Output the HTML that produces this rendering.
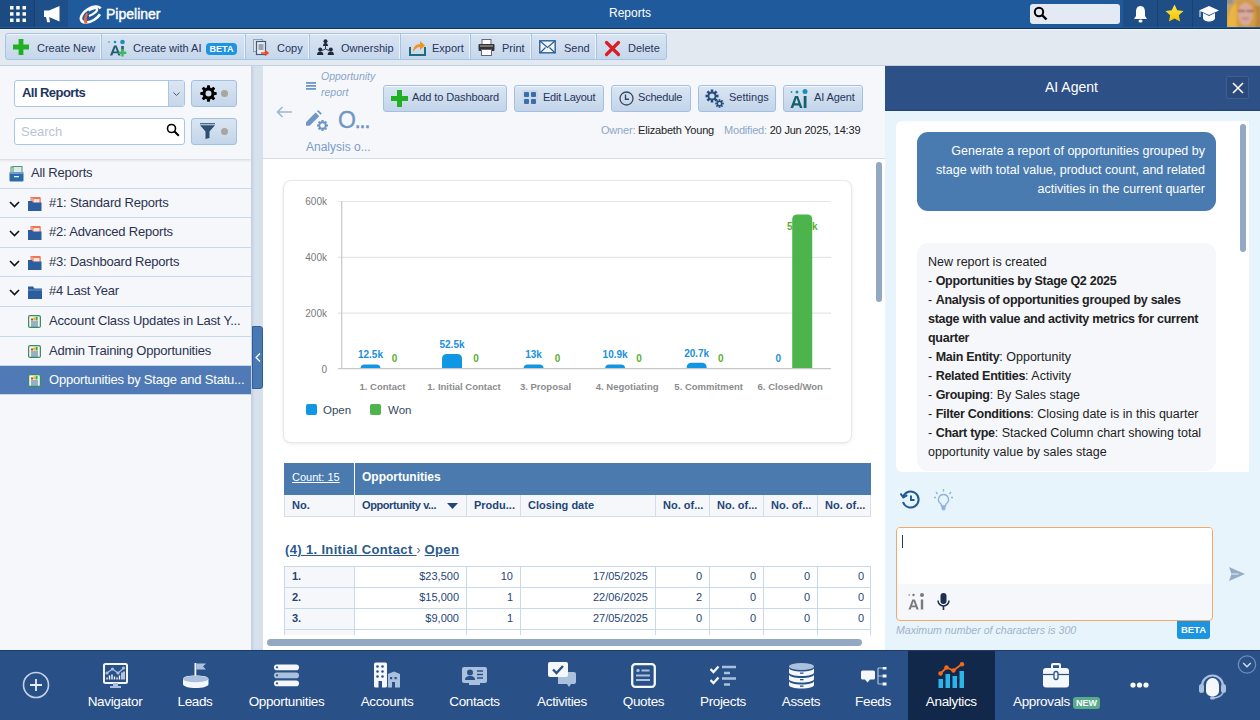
<!DOCTYPE html>
<html><head><meta charset="utf-8">
<style>
*{box-sizing:border-box;margin:0;padding:0}
html,body{width:1260px;height:720px;overflow:hidden;font-family:"Liberation Sans",sans-serif;background:#f5f7fb;color:#1d3b66}
.abs{position:absolute}
svg{display:block}
#top{left:0;top:0;width:1260px;height:29px;background:#1f5b9c;border-bottom:1px solid #0e3262}
#tb{z-index:5;left:0;top:29px;width:1260px;height:37px;background:#e2e9f1;border-bottom:1px solid #c3d0de;box-shadow:inset 0 1px 0 #f3f6fa}
.grp{position:absolute;top:4px;height:27px;border:1px solid #a7c3e2;border-radius:3px;background:linear-gradient(#d8e4f2,#c6d7ec);box-shadow:inset 0 1px 0 #f2f6fb;display:flex}
.btn{position:relative;height:25px;display:flex;align-items:center;font-size:11px;color:#27355a;border-right:1px solid #a7c3e2;box-shadow:inset -1px 0 0 #eaf1fa}
.btn:last-child{border-right:none;box-shadow:none}
.btn svg{position:absolute;top:3px}
.btn span{position:absolute;top:8px;white-space:nowrap}
#left{left:0;top:65px;width:251px;height:585px;background:#f5f7fb}
#sep{left:251px;top:65px;width:12px;height:585px;background:#d7e1ec;box-shadow:inset 2px 0 2px rgba(60,80,110,0.12)}
#center{left:263px;top:65px;width:622px;height:585px;background:#fff}
#ai{left:885px;top:65px;width:375px;height:585px;background:#e8f4fc}
#nav{left:0;top:650px;width:1260px;height:70px;background:#2a5088}
</style></head><body>
<!-- TOP BAR -->
<div id="top" class="abs">
  <div class="abs" style="left:0;top:0;width:34px;height:27px;background:#1c4b82"></div>
  <div class="abs" style="left:34px;top:0;width:1px;height:27px;background:#173f6e"></div>
  <div class="abs" style="left:35px;top:0;width:33px;height:27px;background:#1f4f88"></div>
  <svg class="abs" style="left:10px;top:6px" width="16" height="16" viewBox="0 0 16 16" fill="#fff">
    <rect x="0" y="0" width="3.5" height="3.5"/><rect x="6.2" y="0" width="3.5" height="3.5"/><rect x="12.5" y="0" width="3.5" height="3.5"/>
    <rect x="0" y="6.2" width="3.5" height="3.5"/><rect x="6.2" y="6.2" width="3.5" height="3.5"/><rect x="12.5" y="6.2" width="3.5" height="3.5"/>
    <rect x="0" y="12.5" width="3.5" height="3.5"/><rect x="6.2" y="12.5" width="3.5" height="3.5"/><rect x="12.5" y="12.5" width="3.5" height="3.5"/>
  </svg>
  <svg class="abs" style="left:43px;top:5px" width="18" height="18" viewBox="0 0 18 18" fill="#fff"><path d="M1 5.5h5L16.5 1v15.5L6 12H1z"/><path d="M3 12h3.2l.8 5.3H4.2z"/></svg>
  <svg class="abs" style="left:78px;top:4px" width="26" height="21" viewBox="0 0 26 21"><g transform="rotate(-32 13 10.5)"><ellipse cx="13" cy="10.5" rx="11.3" ry="6.2" fill="none" stroke="#fff" stroke-width="2.6" stroke-dasharray="52 8" stroke-dashoffset="-6"/></g><path d="M10.5 6.5 C14 4.5 18 3.5 19 5 C20 6.5 16 10 11 12" fill="none" stroke="#fff" stroke-width="2.2"/><path d="M6.5 19.5 C5 16 6 12 8.5 8.5 L10 10 C8.5 13 8.5 16 9.5 19.5z" fill="#f0623a"/></svg>
  <div class="abs" style="left:106px;top:6px;font-size:14px;color:#fff;-webkit-text-stroke:0.4px #fff">Pipeliner</div>
  <div class="abs" style="left:609px;top:6px;font-size:12px;color:#fff">Reports</div>
  <div class="abs" style="left:1030px;top:4px;width:90px;height:20px;background:#e3eaf3;border-radius:3px"></div>
  <svg class="abs" style="left:1033px;top:6px" width="15" height="15" viewBox="0 0 15 15"><circle cx="6" cy="6" r="4.2" fill="none" stroke="#000" stroke-width="2"/><path d="M9 9l4.5 4.5" stroke="#000" stroke-width="2.4"/></svg>
  <div class="abs" style="left:1123px;top:0;width:104px;height:27px;background:#1f4d86"></div>
  <div class="abs" style="left:1157px;top:0;width:1px;height:27px;background:#1a4170"></div>
  <div class="abs" style="left:1192px;top:0;width:1px;height:27px;background:#1a4170"></div>
  <svg class="abs" style="left:1133px;top:5px" width="15" height="18" viewBox="0 0 15 18" fill="#fff"><path d="M7.5 1C4 1 3 4 3 7v4L1 14h13l-2-3V7c0-3-1-6-4.5-6z"/><ellipse cx="7.5" cy="16" rx="2" ry="1.5"/></svg>
  <svg class="abs" style="left:1165px;top:4px" width="19" height="18" viewBox="0 0 20 19"><defs><linearGradient id="sg" x1="0" y1="0" x2="0" y2="1"><stop offset="0" stop-color="#ffe84a"/><stop offset="1" stop-color="#f2c200"/></linearGradient></defs><path d="M10 0.5l2.9 6.1 6.6.8-4.9 4.5 1.3 6.6L10 15.2l-5.9 3.3 1.3-6.6L.5 7.4l6.6-.8z" fill="url(#sg)"/></svg>
  <svg class="abs" style="left:1199px;top:6px" width="20" height="16" viewBox="0 0 20 16" fill="#fff"><path d="M10 0L0 4.5 10 9l10-4.5z"/><path d="M4 7v5c0 2 3 3.5 6 3.5s6-1.5 6-3.5V7l-6 3z"/><path d="M1 5v6" stroke="#fff" stroke-width="1"/></svg>
  <svg class="abs" style="left:1227px;top:0" width="33" height="27" viewBox="0 0 33 27"><defs><filter id="bl" x="-20%" y="-20%" width="140%" height="140%"><feGaussianBlur stdDeviation="1.1"/></filter><clipPath id="avc"><rect width="33" height="27"/></clipPath></defs><g clip-path="url(#avc)"><rect width="33" height="27" fill="#b8a48a"/><g filter="url(#bl)"><rect x="-2" y="-2" width="8" height="6" fill="#9a9088"/><path d="M-2 30C-3 14 2 1 17 -1c14 0 19 12 18 31z" fill="#d49a3c"/><path d="M0 28C0 16 3 6 9 3c2 6 0 16 1 25z" fill="#eab545"/><ellipse cx="18.5" cy="14" rx="7.5" ry="11.5" fill="#d9aa9c"/><path d="M11 11h7M19.5 11h7" stroke="#6a4a44" stroke-width="1.6"/><path d="M15 18q4 1.5 7 0" stroke="#a66a5e" stroke-width="1.3" fill="none"/><path d="M27 6c3 6 3 14 1 22h6V6z" fill="#b8863c"/></g></g></svg>
</div>
<!-- TOOLBAR -->
<div id="tb" class="abs">
 <div class="grp" style="left:5px;width:662px">
  <div class="btn" style="width:96px">
   <svg style="left:7px;top:5px" width="16" height="16" viewBox="0 0 16 16"><path d="M5.6 0h4.8v5.6H16v4.8h-5.6V16H5.6v-5.6H0V5.6h5.6z" fill="#21b021"/></svg>
   <span style="left:31px">Create New</span></div>
  <div class="btn" style="width:144px">
   <svg style="left:6px;top:4.5px" width="20" height="20" viewBox="0 0 20 20"><circle cx="1" cy="3" r="0.8" fill="#1a8fb8"/><circle cx="7" cy="3" r="1.3" fill="#1a8fb8"/><circle cx="14.5" cy="3" r="2.3" fill="#1a8fb8"/><path d="M2 16.5L6 6.5h2.6l4 10h-2.3l-.8-2.2H5.2l-.8 2.2zM5.9 12.5h3L7.3 8.3z" fill="#235e70"/><rect x="13.2" y="7" width="2.6" height="5" fill="#235e70"/><path d="M13.3 10h2.4v2.6h2.6V15h-2.6v2.6h-2.4V15h-2.6v-2.4h2.6z" fill="#3db85a"/></svg>
   <span style="left:31px">Create with AI</span>
   <div class="abs" style="left:104px;top:9px;width:31px;height:12px;border-radius:4px;background:#1b95e0;color:#fff;font-size:9px;font-weight:bold;line-height:12px;text-align:center">BETA</div></div>
  <div class="btn" style="width:64px">
   <svg style="left:7px;top:4.5px" width="17" height="18" viewBox="0 0 17 18"><rect x="0.5" y="0.5" width="9" height="12" fill="#dfe6ee" stroke="#8fa2b8"/><rect x="3.5" y="2.5" width="9" height="13" fill="#e9eef4" stroke="#3f5d7a" stroke-width="1.2"/><path d="M5.5 6h5M5.5 8h5M5.5 10h5" stroke="#556" stroke-width="1"/><path d="M8 14h6M12 11.5l3 2.5-3 2.5" stroke="#f04b1e" stroke-width="1.6" fill="none"/></svg>
   <span style="left:31px">Copy</span></div>
  <div class="btn" style="width:91px">
   <svg style="left:7px;top:4.5px" width="17" height="17" viewBox="0 0 17 17" fill="#1e2a3a"><circle cx="8.5" cy="2.2" r="2"/><path d="M6 7c0-2 1-3 2.5-3S11 5 11 7z"/><circle cx="3.2" cy="10.5" r="2"/><path d="M0 16c0-2.5 1.3-3.5 3.2-3.5S6.4 13.5 6.4 16z"/><circle cx="13.8" cy="10.5" r="2"/><path d="M10.6 16c0-2.5 1.3-3.5 3.2-3.5s3.2 1 3.2 3.5z"/><path d="M8.5 7v3M8.5 10L5 11.5M8.5 10l3.5 1.5" stroke="#1e2a3a" stroke-width="0.9" fill="none"/></svg>
   <span style="left:31px">Ownership</span></div>
  <div class="btn" style="width:70px">
   <svg style="left:8px;top:4.5px" width="17" height="17" viewBox="0 0 17 17"><path d="M1 8v8h15V8" fill="none" stroke="#1f6b80" stroke-width="2"/><path d="M4 13c0-5 3-8 7-8V2l5 4.5-5 4.5V8c-3 0-5 2-7 5z" fill="#f39421"/></svg>
   <span style="left:31px">Export</span></div>
  <div class="btn" style="width:61px">
   <svg style="left:7px;top:4.5px" width="17" height="17" viewBox="0 0 17 17"><rect x="4" y="0.5" width="9" height="5" fill="#fff" stroke="#667" stroke-width="1"/><rect x="0.5" y="5" width="16" height="7" rx="1" fill="#333"/><rect x="2" y="6" width="13" height="2" fill="#777"/><rect x="3.5" y="10.5" width="10" height="6" fill="#fff" stroke="#667"/></svg>
   <span style="left:31px">Print</span></div>
  <div class="btn" style="width:65px">
   <svg style="left:7px;top:5.5px" width="17" height="14" viewBox="0 0 17 14"><rect x="0.8" y="0.8" width="15.4" height="12" fill="#f2f6fa" stroke="#2a5f96" stroke-width="1.4"/><path d="M1 1l7.5 6.5L16 1M1 13l5.5-5.5M16 13l-5.5-5.5" stroke="#2a5f96" stroke-width="1.2" fill="none"/></svg>
   <span style="left:32px">Send</span></div>
  <div class="btn" style="width:69px">
   <svg style="left:7px;top:5.5px" width="17" height="17" viewBox="0 0 17 17"><path d="M2.5 2.5l12 12M14.5 2.5l-12 12" stroke="#d81f26" stroke-width="3.2" stroke-linecap="round"/></svg>
   <span style="left:31px">Delete</span></div>
 </div>
</div>
<div id="left" class="abs">
 <div class="abs" style="left:14px;top:15px;width:171px;height:27px;background:#fff;border:1px solid #a9c6e8;border-radius:3px"></div>
 <div class="abs" style="left:22px;top:20px;font-size:13px;font-weight:bold;color:#1d3560;letter-spacing:-0.55px">All Reports</div>
 <div class="abs" style="left:168px;top:16px;width:16px;height:25px;background:linear-gradient(#dbe6f2,#c7d7ea);border-left:1px solid #a9c6e8;border-radius:0 2px 2px 0"></div>
 <svg class="abs" style="left:173px;top:27px" width="7" height="4" viewBox="0 0 7 4"><path d="M0.5 0.5l3 3 3-3" stroke="#4a5a70" stroke-width="1" fill="none"/></svg>
 <div class="abs" style="left:191px;top:15px;width:46px;height:27px;background:linear-gradient(#d9e5f2,#c4d5ea);border:1px solid #a2c0e2;border-radius:3px"></div>
 <svg class="abs" style="left:199.5px;top:19.5px" width="17" height="17" viewBox="0 0 17 17"><path fill="#000" fill-rule="evenodd" d="M13.95 6.24 L14.13 6.73 L16.70 7.21 L16.70 9.79 L14.13 10.27 L13.95 10.76 L13.73 11.23 L15.21 13.38 L13.38 15.21 L11.23 13.73 L10.76 13.95 L10.27 14.13 L9.79 16.70 L7.21 16.70 L6.73 14.13 L6.24 13.95 L5.77 13.73 L3.62 15.21 L1.79 13.38 L3.27 11.23 L3.05 10.76 L2.87 10.27 L0.30 9.79 L0.30 7.21 L2.87 6.73 L3.05 6.24 L3.27 5.77 L1.79 3.62 L3.62 1.79 L5.77 3.27 L6.24 3.05 L6.73 2.87 L7.21 0.30 L9.79 0.30 L10.27 2.87 L10.76 3.05 L11.23 3.27 L13.38 1.79 L15.21 3.62 L13.73 5.77Z M11.5 8.5 A3.0 3.0 0 1 0 5.5 8.5 A3.0 3.0 0 1 0 11.5 8.5Z"/></svg>
 <div class="abs" style="left:221px;top:24.5px;width:7px;height:7px;border-radius:50%;background:#a8a6a0"></div>
 <div class="abs" style="left:14px;top:53px;width:171px;height:27px;background:#fff;border:1px solid #a9c6e8;border-radius:3px"></div>
 <div class="abs" style="left:21px;top:59px;font-size:13px;color:#b9c4d2">Search</div>
 <svg class="abs" style="left:166px;top:58px" width="14" height="14" viewBox="0 0 14 14"><circle cx="5.5" cy="5.5" r="4" fill="none" stroke="#000" stroke-width="1.6"/><path d="M8.3 8.3l4.5 4.5" stroke="#000" stroke-width="2"/></svg>
 <div class="abs" style="left:191px;top:53px;width:46px;height:27px;background:linear-gradient(#d9e5f2,#c4d5ea);border:1px solid #a2c0e2;border-radius:3px"></div>
 <svg class="abs" style="left:200px;top:58px" width="15" height="16" viewBox="0 0 15 16"><rect x="0" y="0" width="15" height="1.3" fill="#4d6a86"/><path d="M0 2.2h15L9.5 8.5V15L5.5 16V8.5z" fill="#2d5070"/></svg>
 <div class="abs" style="left:221px;top:63px;width:7px;height:7px;border-radius:50%;background:#a8a6a0"></div>
 <div class="abs" style="left:0;top:94px;width:251px;height:1px;background:#dde2e8;box-shadow:0 1px 2px rgba(0,0,0,0.10)"></div>
 <div class="abs" style="left:0;top:94px;width:251px;height:30px;background:transparent;border-bottom:1px solid #c6d9ee"><svg class="abs" style="left:9px;top:7px" width="15" height="16" viewBox="0 0 15 16"><rect x="2" y="1" width="9" height="7" fill="#e8f0e8" stroke="#4b9a6a"/><rect x="4" y="0.5" width="9" height="6" fill="#dfe8ef" stroke="#4b9a6a"/><rect x="0.5" y="7" width="14" height="8.5" rx="1" fill="#2f6aa8"/><rect x="0.5" y="6" width="14" height="2" fill="#6f9cc8"/><rect x="5" y="10" width="5" height="1.3" fill="#cfe"/></svg><div class="abs" style="left:31px;top:6px;font-size:13px;color:#2c3350;white-space:nowrap;letter-spacing:-0.2px">All Reports</div></div>
 <div class="abs" style="left:0;top:124px;width:251px;height:29px;background:transparent;border-bottom:1px solid #c6d9ee"><svg class="abs" style="left:9px;top:12px" width="11" height="7" viewBox="0 0 11 7"><path d="M1 1l4.5 4.5L10 1" stroke="#111" stroke-width="1.6" fill="none"/></svg><svg class="abs" style="left:28px;top:8px" width="14" height="14" viewBox="0 0 14 14"><rect x="3" y="0.5" width="9" height="6" fill="#f7c9bb" stroke="#ee7654"/><rect x="5" y="1.5" width="7" height="5" fill="#fbe1d8" stroke="#ee7654"/><path d="M0 4h4l1 1.5h8.5V14H0z" fill="#2c5d9c"/></svg><div class="abs" style="left:49px;top:6px;font-size:13px;color:#2c3350;white-space:nowrap;letter-spacing:-0.2px">#1: Standard Reports</div></div>
 <div class="abs" style="left:0;top:153px;width:251px;height:30px;background:transparent;border-bottom:1px solid #c6d9ee"><svg class="abs" style="left:9px;top:12px" width="11" height="7" viewBox="0 0 11 7"><path d="M1 1l4.5 4.5L10 1" stroke="#111" stroke-width="1.6" fill="none"/></svg><svg class="abs" style="left:28px;top:8px" width="14" height="14" viewBox="0 0 14 14"><rect x="3" y="0.5" width="9" height="6" fill="#f7c9bb" stroke="#ee7654"/><rect x="5" y="1.5" width="7" height="5" fill="#fbe1d8" stroke="#ee7654"/><path d="M0 4h4l1 1.5h8.5V14H0z" fill="#2c5d9c"/></svg><div class="abs" style="left:49px;top:6px;font-size:13px;color:#2c3350;white-space:nowrap;letter-spacing:-0.2px">#2: Advanced Reports</div></div>
 <div class="abs" style="left:0;top:183px;width:251px;height:29px;background:transparent;border-bottom:1px solid #c6d9ee"><svg class="abs" style="left:9px;top:12px" width="11" height="7" viewBox="0 0 11 7"><path d="M1 1l4.5 4.5L10 1" stroke="#111" stroke-width="1.6" fill="none"/></svg><svg class="abs" style="left:28px;top:8px" width="14" height="14" viewBox="0 0 14 14"><rect x="3" y="0.5" width="9" height="6" fill="#f7c9bb" stroke="#ee7654"/><rect x="5" y="1.5" width="7" height="5" fill="#fbe1d8" stroke="#ee7654"/><path d="M0 4h4l1 1.5h8.5V14H0z" fill="#2c5d9c"/></svg><div class="abs" style="left:49px;top:6px;font-size:13px;color:#2c3350;white-space:nowrap;letter-spacing:-0.2px">#3: Dashboard Reports</div></div>
 <div class="abs" style="left:0;top:212px;width:251px;height:30px;background:transparent;border-bottom:1px solid #c6d9ee"><svg class="abs" style="left:9px;top:12px" width="11" height="7" viewBox="0 0 11 7"><path d="M1 1l4.5 4.5L10 1" stroke="#111" stroke-width="1.6" fill="none"/></svg><svg class="abs" style="left:28px;top:9px" width="14" height="13" viewBox="0 0 14 13"><path d="M0 0.5h5l1.5 2H14V13H0z" fill="#2c5d9c"/><path d="M0 4h14" stroke="#6d95c4" stroke-width="1"/></svg><div class="abs" style="left:49px;top:6px;font-size:13px;color:#2c3350;white-space:nowrap;letter-spacing:-0.2px">#4 Last Year</div></div>
 <div class="abs" style="left:0;top:242px;width:251px;height:30px;background:transparent;border-bottom:1px solid #c6d9ee"><svg class="abs" style="left:28px;top:8px" width="13" height="13" viewBox="0 0 13 13"><rect x="0.6" y="0.6" width="11.8" height="11.8" rx="1.5" fill="#f2f4f2" stroke="#3c8c5c" stroke-width="1.2"/><rect x="3" y="3.5" width="2" height="2" fill="#e8312e"/><rect x="5.3" y="2.5" width="2" height="3" fill="#f2b51c"/><rect x="7.6" y="1.8" width="2" height="3.7" fill="#2fb34a"/><path d="M3 7h7M3 9h7M3 11h7" stroke="#3b6e9c" stroke-width="1"/></svg><div class="abs" style="left:49px;top:6px;font-size:13px;color:#2c3350;white-space:nowrap;letter-spacing:-0.2px">Account Class Updates in Last Y...</div></div>
 <div class="abs" style="left:0;top:272px;width:251px;height:29px;background:transparent;border-bottom:1px solid #c6d9ee"><svg class="abs" style="left:28px;top:8px" width="13" height="13" viewBox="0 0 13 13"><rect x="0.6" y="0.6" width="11.8" height="11.8" rx="1.5" fill="#f2f4f2" stroke="#3c8c5c" stroke-width="1.2"/><rect x="3" y="3.5" width="2" height="2" fill="#e8312e"/><rect x="5.3" y="2.5" width="2" height="3" fill="#f2b51c"/><rect x="7.6" y="1.8" width="2" height="3.7" fill="#2fb34a"/><path d="M3 7h7M3 9h7M3 11h7" stroke="#3b6e9c" stroke-width="1"/></svg><div class="abs" style="left:49px;top:6px;font-size:13px;color:#2c3350;white-space:nowrap;letter-spacing:-0.2px">Admin Training Opportunities</div></div>
 <div class="abs" style="left:0;top:301px;width:251px;height:29px;background:#4f7ab5;border-bottom:1px solid #c6d9ee"><svg class="abs" style="left:28px;top:8px" width="13" height="13" viewBox="0 0 13 13"><rect x="0.6" y="0.6" width="11.8" height="11.8" rx="1.5" fill="#f2f4f2" stroke="#3c8c5c" stroke-width="1.2"/><rect x="3" y="3.5" width="2" height="2" fill="#e8312e"/><rect x="5.3" y="2.5" width="2" height="3" fill="#f2b51c"/><rect x="7.6" y="1.8" width="2" height="3.7" fill="#2fb34a"/><path d="M3 7h7M3 9h7M3 11h7" stroke="#3b6e9c" stroke-width="1"/></svg><div class="abs" style="left:49px;top:6px;font-size:13px;color:#fff;white-space:nowrap;letter-spacing:-0.2px">Opportunities by Stage and Statu...</div></div>
</div>
<div id="sep" class="abs">
 <div class="abs" style="left:1px;top:261px;width:11px;height:63px;background:#4a78b0;border:1px solid #2d5e9d;border-radius:0 3px 3px 0"></div>
 <svg class="abs" style="left:4px;top:288px" width="6" height="9" viewBox="0 0 6 9"><path d="M5 0.5L1 4.5 5 8.5" stroke="#fff" stroke-width="1.2" fill="none"/></svg>
</div>
<div id="center" class="abs">
 <div class="abs" style="left:0;top:0;width:622px;height:94px;background:#f5f7fb;border-bottom:1px solid #d3dde8"></div>
 <svg class="abs" style="left:13px;top:41px" width="17" height="12" viewBox="0 0 17 12"><path d="M16 6H2M6.5 1L1.5 6l5 5" stroke="#9db5d4" stroke-width="1.6" fill="none"/></svg>
 <svg class="abs" style="left:43px;top:17px" width="10" height="8" viewBox="0 0 10 8" fill="#7096c6"><rect x="0" y="0" width="10" height="1.8"/><rect x="0" y="3" width="10" height="1.8"/><rect x="0" y="6" width="10" height="1.8"/></svg>
 <div class="abs" style="left:58px;top:3px;font-size:10.5px;font-style:italic;color:#8aa5c7;line-height:16px">Opportunity<br>report</div>
 <svg class="abs" style="left:43px;top:45px" width="23" height="22" viewBox="0 0 23 22"><path d="M0 15.8V12.2L9.6 2.6l3.6 3.6L3.6 15.8z" fill="#6f95c5"/><path d="M11 1.2L12.2 0l3.6 3.6-1.2 1.2z" fill="#6f95c5"/><path fill="#6f95c5" fill-rule="evenodd" d="M20.20 13.97 L20.26 14.13 L22.01 14.51 L22.01 16.49 L20.26 16.87 L20.20 17.03 L20.13 17.19 L21.10 18.69 L19.69 20.10 L18.19 19.13 L18.03 19.20 L17.87 19.26 L17.49 21.01 L15.51 21.01 L15.13 19.26 L14.97 19.20 L14.81 19.13 L13.31 20.10 L11.90 18.69 L12.87 17.19 L12.80 17.03 L12.74 16.87 L10.99 16.49 L10.99 14.51 L12.74 14.13 L12.80 13.97 L12.87 13.81 L11.90 12.31 L13.31 10.90 L14.81 11.87 L14.97 11.80 L15.13 11.74 L15.51 9.99 L17.49 9.99 L17.87 11.74 L18.03 11.80 L18.19 11.87 L19.69 10.90 L21.10 12.31 L20.13 13.81Z M18.8 15.5 A2.3 2.3 0 1 0 14.2 15.5 A2.3 2.3 0 1 0 18.8 15.5Z"/></svg>
 <div class="abs" style="left:75px;top:42px;font-size:23px;color:#6f95c5;letter-spacing:-1.5px;-webkit-text-stroke:0.3px #6f95c5">O...</div>
 <div class="abs" style="left:43px;top:75px;font-size:12px;color:#7a9cc8">Analysis o...</div>
 <div class="abs" style="left:120px;top:20px;width:124px;height:27px;background:linear-gradient(#d9e5f3,#c4d5ea);border:1px solid #a3c0e2;border-radius:3px;box-shadow:inset 0 1px 0 #f4f8fc"></div>
 <div class="abs" style="left:251px;top:20px;width:90px;height:27px;background:linear-gradient(#d9e5f3,#c4d5ea);border:1px solid #a3c0e2;border-radius:3px;box-shadow:inset 0 1px 0 #f4f8fc"></div>
 <div class="abs" style="left:348px;top:20px;width:80px;height:27px;background:linear-gradient(#d9e5f3,#c4d5ea);border:1px solid #a3c0e2;border-radius:3px;box-shadow:inset 0 1px 0 #f4f8fc"></div>
 <div class="abs" style="left:435px;top:20px;width:78px;height:27px;background:linear-gradient(#d9e5f3,#c4d5ea);border:1px solid #a3c0e2;border-radius:3px;box-shadow:inset 0 1px 0 #f4f8fc"></div>
 <div class="abs" style="left:520px;top:20px;width:80px;height:27px;background:linear-gradient(#d9e5f3,#c4d5ea);border:1px solid #a3c0e2;border-radius:3px;box-shadow:inset 0 1px 0 #f4f8fc"></div>
 <svg class="abs" style="left:128px;top:25px" width="17" height="17" viewBox="0 0 17 17"><path d="M6 0h5v6h6v5h-6v6H6v-6H0V6h6z" fill="#21b021"/></svg><div class="abs" style="left:149px;top:26px;font-size:11px;color:#27355a;white-space:nowrap;letter-spacing:-0.1px">Add to Dashboard</div>
 <svg class="abs" style="left:259px;top:25px" width="16" height="16" viewBox="0 0 16 16"><rect x="0" y="0" width="16" height="16" fill="#c9d8ea"/><rect x="2" y="2" width="5" height="5" rx="1" fill="#3c6ea8"/><rect x="9" y="2" width="5" height="5" rx="1" fill="#3c6ea8"/><rect x="2" y="9" width="5" height="5" rx="1" fill="#3c6ea8"/><rect x="9" y="9" width="5" height="5" rx="1" fill="#3c6ea8"/></svg><div class="abs" style="left:280px;top:26px;font-size:11px;color:#27355a;white-space:nowrap;letter-spacing:-0.25px">Edit Layout</div>
 <svg class="abs" style="left:356px;top:26px" width="15" height="15" viewBox="0 0 15 15"><circle cx="7.5" cy="7.5" r="6.5" fill="none" stroke="#3a4a5e" stroke-width="1.3"/><path d="M6.5 3.5v4.8h3.5" stroke="#3a4a5e" stroke-width="1.4" fill="none"/></svg><div class="abs" style="left:375px;top:26px;font-size:11px;color:#27355a;white-space:nowrap;letter-spacing:-0.2px">Schedule</div>
 <svg class="abs" style="left:442px;top:24px" width="20" height="20" viewBox="0 0 20 20" fill="#234d7c"><g transform="translate(7 7)"><circle r="4.3"/><rect x="-1.3" y="-6.5" width="2.6" height="13"/><rect x="-6.5" y="-1.3" width="13" height="2.6"/><rect x="-1.3" y="-6.5" width="2.6" height="13" transform="rotate(45)"/><rect x="-1.3" y="-6.5" width="2.6" height="13" transform="rotate(-45)"/><circle r="2.6" fill="#d0ddee"/></g><g transform="translate(14.5 14.5)"><circle r="2.8"/><rect x="-0.9" y="-4.3" width="1.8" height="8.6"/><rect x="-4.3" y="-0.9" width="8.6" height="1.8"/><rect x="-0.9" y="-4.3" width="1.8" height="8.6" transform="rotate(45)"/><rect x="-0.9" y="-4.3" width="1.8" height="8.6" transform="rotate(-45)"/><circle r="1.5" fill="#c8d8ec"/></g></svg><div class="abs" style="left:466px;top:26px;font-size:11px;color:#27355a;white-space:nowrap">Settings</div>
 <svg class="abs" style="left:527px;top:24px" width="20" height="20" viewBox="0 0 20 20"><circle cx="1.5" cy="3" r="0.9" fill="#1591b8"/><circle cx="7" cy="3" r="1.5" fill="#1591b8"/><circle cx="15" cy="2.5" r="2.5" fill="#1591b8"/><path d="M0.5 19L5 7h3l4.5 12h-2.6l-.9-2.6H4l-.9 2.6zM4.8 14.2h3.6L6.5 9z" fill="#135f6e"/><rect x="13.7" y="7" width="2.8" height="12" fill="#135f6e"/></svg><div class="abs" style="left:551px;top:26px;font-size:11px;color:#27355a;white-space:nowrap;letter-spacing:-0.1px">AI Agent</div>
 <div class="abs" style="left:338px;top:59px;font-size:11px;letter-spacing:-0.2px;white-space:nowrap;color:#222"><span style="color:#8ea8c6">Owner:</span> Elizabeth Young</div>
 <div class="abs" style="left:461px;top:59px;font-size:11px;letter-spacing:-0.2px;white-space:nowrap;color:#222"><span style="color:#8ea8c6">Modified:</span> 20 Jun 2025, 14:39</div>
</div>
<div class="abs" style="left:263px;top:158px;width:622px;height:492px;overflow:hidden;background:#fff"><div class="abs" style="left:0;top:0;width:622px;height:1px;background:#d3dde8"></div><div class="abs" style="left:21px;top:23px;width:567px;height:261px;background:#fff;border-radius:7px;box-shadow:0 0 0 1px #e9e9e9,0 1px 4px rgba(0,0,0,0.13)"></div>
<svg class="abs" style="left:0;top:0" width="620" height="300" viewBox="263 158 620 300">
<line x1="338" y1="201.5" x2="831" y2="201.5" stroke="#e6e6e6" stroke-width="1.2"/>
<text x="327" y="205.1" text-anchor="end" font-size="10" fill="#7a7a7a" font-family="Liberation Sans">600k</text>
<line x1="338" y1="257.3" x2="831" y2="257.3" stroke="#e6e6e6" stroke-width="1.2"/>
<text x="327" y="260.90000000000003" text-anchor="end" font-size="10" fill="#7a7a7a" font-family="Liberation Sans">400k</text>
<line x1="338" y1="313.1" x2="831" y2="313.1" stroke="#e6e6e6" stroke-width="1.2"/>
<text x="327" y="316.70000000000005" text-anchor="end" font-size="10" fill="#7a7a7a" font-family="Liberation Sans">200k</text>
<text x="327" y="372.5" text-anchor="end" font-size="10" fill="#7a7a7a" font-family="Liberation Sans">0</text>
<line x1="341.7" y1="201" x2="341.7" y2="369" stroke="#c8c8c8" stroke-width="1.2"/>
<path d="M360.47499999999997 368.6 V368.6 Q360.47499999999997 364.40000000000003 364.67499999999995 364.40000000000003 H376.275 Q380.47499999999997 364.40000000000003 380.47499999999997 368.6 V368.6Z" fill="#1196e3"/>
<text x="370.47499999999997" y="358.40" text-anchor="middle" font-size="10" font-weight="bold" fill="#1a8fe0" font-family="Liberation Sans">12.5k</text>
<text x="394.47499999999997" y="362.10" text-anchor="middle" font-size="10" font-weight="bold" fill="#5caf32" font-family="Liberation Sans">0</text>
<text x="382.47499999999997" y="390" text-anchor="middle" font-size="9.5" font-weight="bold" fill="#8c8c8c" font-family="Liberation Sans">1. Contact</text>
<path d="M442.025 368.6 V358.95250000000004 Q442.025 353.95250000000004 447.025 353.95250000000004 H457.025 Q462.025 353.95250000000004 462.025 358.95250000000004 V368.6Z" fill="#1196e3"/>
<text x="452.025" y="347.95" text-anchor="middle" font-size="10" font-weight="bold" fill="#1a8fe0" font-family="Liberation Sans">52.5k</text>
<text x="476.025" y="362.10" text-anchor="middle" font-size="10" font-weight="bold" fill="#5caf32" font-family="Liberation Sans">0</text>
<text x="464.025" y="390" text-anchor="middle" font-size="9.5" font-weight="bold" fill="#8c8c8c" font-family="Liberation Sans">1. Initial Contact</text>
<path d="M523.575 368.6 V368.6 Q523.575 364.40000000000003 527.7750000000001 364.40000000000003 H539.375 Q543.575 364.40000000000003 543.575 368.6 V368.6Z" fill="#1196e3"/>
<text x="533.575" y="358.40" text-anchor="middle" font-size="10" font-weight="bold" fill="#1a8fe0" font-family="Liberation Sans">13k</text>
<text x="557.575" y="362.10" text-anchor="middle" font-size="10" font-weight="bold" fill="#5caf32" font-family="Liberation Sans">0</text>
<text x="545.575" y="390" text-anchor="middle" font-size="9.5" font-weight="bold" fill="#8c8c8c" font-family="Liberation Sans">3. Proposal</text>
<path d="M605.125 368.6 V368.6 Q605.125 364.40000000000003 609.325 364.40000000000003 H620.925 Q625.125 364.40000000000003 625.125 368.6 V368.6Z" fill="#1196e3"/>
<text x="615.125" y="358.40" text-anchor="middle" font-size="10" font-weight="bold" fill="#1a8fe0" font-family="Liberation Sans">10.9k</text>
<text x="639.125" y="362.10" text-anchor="middle" font-size="10" font-weight="bold" fill="#5caf32" font-family="Liberation Sans">0</text>
<text x="627.125" y="390" text-anchor="middle" font-size="9.5" font-weight="bold" fill="#8c8c8c" font-family="Liberation Sans">4. Negotiating</text>
<path d="M686.675 368.6 V367.8247 Q686.675 362.8247 691.675 362.8247 H701.675 Q706.675 362.8247 706.675 367.8247 V368.6Z" fill="#1196e3"/>
<text x="696.675" y="356.82" text-anchor="middle" font-size="10" font-weight="bold" fill="#1a8fe0" font-family="Liberation Sans">20.7k</text>
<text x="720.675" y="362.10" text-anchor="middle" font-size="10" font-weight="bold" fill="#5caf32" font-family="Liberation Sans">0</text>
<text x="708.675" y="390" text-anchor="middle" font-size="9.5" font-weight="bold" fill="#8c8c8c" font-family="Liberation Sans">5. Commitment</text>
<text x="778.2249999999999" y="362.10" text-anchor="middle" font-size="10" font-weight="bold" fill="#1a8fe0" font-family="Liberation Sans">0</text>
<text x="802.2249999999999" y="230.10" text-anchor="middle" font-size="10" font-weight="bold" fill="#5caf32" font-family="Liberation Sans">552.5k</text>
<path d="M792.2249999999999 368.6 V219.59200000000004 Q792.2249999999999 214.59200000000004 797.2249999999999 214.59200000000004 H807.2249999999999 Q812.2249999999999 214.59200000000004 812.2249999999999 219.59200000000004 V368.6Z" fill="#4db34d"/>
<text x="790.2249999999999" y="390" text-anchor="middle" font-size="9.5" font-weight="bold" fill="#8c8c8c" font-family="Liberation Sans">6. Closed/Won</text>
<line x1="338" y1="368.6" x2="831" y2="368.6" stroke="#c8c8c8" stroke-width="1.4"/>
<rect x="306" y="404" width="11" height="11" rx="2" fill="#1196e3"/><text x="323" y="414" font-size="11.5" fill="#34495e" font-family="Liberation Sans">Open</text>
<rect x="370" y="404" width="11" height="11" rx="2" fill="#4db34d"/><text x="388" y="414" font-size="11.5" fill="#34495e" font-family="Liberation Sans">Won</text>
</svg>
<div class="abs" style="left:21px;top:305px;width:587px;height:32px;background:#4a7aae"></div>
<div class="abs" style="left:91px;top:305px;width:1px;height:32px;background:#fff"></div>
<div class="abs" style="left:29px;top:313px;font-size:11px;color:#fff;text-decoration:underline">Count: 15</div>
<div class="abs" style="left:99px;top:312px;font-size:12px;font-weight:bold;color:#fff">Opportunities</div>
<div class="abs" style="left:21px;top:337px;width:587px;height:22px;background:#f5f7fb;border:1px solid #d3deea;border-top:none"></div>
<div class="abs" style="left:91px;top:337px;width:1px;height:22px;background:#d3deea"></div>
<div class="abs" style="left:203px;top:337px;width:1px;height:22px;background:#d3deea"></div>
<div class="abs" style="left:257px;top:337px;width:1px;height:22px;background:#d3deea"></div>
<div class="abs" style="left:392px;top:337px;width:1px;height:22px;background:#d3deea"></div>
<div class="abs" style="left:446px;top:337px;width:1px;height:22px;background:#d3deea"></div>
<div class="abs" style="left:500px;top:337px;width:1px;height:22px;background:#d3deea"></div>
<div class="abs" style="left:554px;top:337px;width:1px;height:22px;background:#d3deea"></div>
<div class="abs" style="left:29px;top:341px;font-size:11px;font-weight:bold;color:#1f4677;white-space:nowrap">No.</div>
<div class="abs" style="left:99px;top:341px;font-size:11px;font-weight:bold;color:#1f4677;white-space:nowrap;letter-spacing:-0.4px">Opportunity v...</div>
<div class="abs" style="left:211px;top:341px;font-size:11px;font-weight:bold;color:#1f4677;white-space:nowrap">Produ...</div>
<div class="abs" style="left:265px;top:341px;font-size:11px;font-weight:bold;color:#1f4677;white-space:nowrap">Closing date</div>
<div class="abs" style="left:400px;top:341px;font-size:11px;font-weight:bold;color:#1f4677;white-space:nowrap">No. of...</div>
<div class="abs" style="left:454px;top:341px;font-size:11px;font-weight:bold;color:#1f4677;white-space:nowrap">No. of...</div>
<div class="abs" style="left:508px;top:341px;font-size:11px;font-weight:bold;color:#1f4677;white-space:nowrap">No. of...</div>
<div class="abs" style="left:562px;top:341px;font-size:11px;font-weight:bold;color:#1f4677;white-space:nowrap">No. of...</div>
<svg class="abs" style="left:184px;top:345px" width="11" height="6" viewBox="0 0 11 6"><path d="M0 0h11L5.5 6z" fill="#1f4677"/></svg>
<div class="abs" style="left:22px;top:384px;font-size:13px;font-weight:bold;color:#2a5a8e;white-space:nowrap;letter-spacing:0.35px"><span style="text-decoration:underline">(4) 1. Initial Contact </span><span style="font-size:12px;font-weight:normal;color:#666"> › </span><span style="text-decoration:underline">Open</span></div>
<div class="abs" style="left:21px;top:408px;width:587px;height:69px;background:#fff;border-left:1px solid #c9d9ec;border-right:1px solid #c9d9ec"></div><div class="abs" style="left:22px;top:408px;width:70px;height:69px;background:#f5f7fb"></div>
<div class="abs" style="left:21px;top:408px;width:587px;height:1px;background:#c9d9ec"></div>
<div class="abs" style="left:21px;top:429px;width:587px;height:1px;background:#c9d9ec"></div>
<div class="abs" style="left:21px;top:450px;width:587px;height:1px;background:#c9d9ec"></div>
<div class="abs" style="left:21px;top:471px;width:587px;height:1px;background:#c9d9ec"></div>
<div class="abs" style="left:91px;top:408px;width:1px;height:69px;background:#c9d9ec"></div>
<div class="abs" style="left:203px;top:408px;width:1px;height:69px;background:#c9d9ec"></div>
<div class="abs" style="left:257px;top:408px;width:1px;height:69px;background:#c9d9ec"></div>
<div class="abs" style="left:392px;top:408px;width:1px;height:69px;background:#c9d9ec"></div>
<div class="abs" style="left:446px;top:408px;width:1px;height:69px;background:#c9d9ec"></div>
<div class="abs" style="left:500px;top:408px;width:1px;height:69px;background:#c9d9ec"></div>
<div class="abs" style="left:554px;top:408px;width:1px;height:69px;background:#c9d9ec"></div>
<div class="abs" style="left:29px;top:412px;font-size:11px;font-weight:bold;color:#1f4677">1.</div>
<div class="abs" style="left:91px;top:412px;width:105px;text-align:right;font-size:11px;color:#1f4677">$23,500</div>
<div class="abs" style="left:203px;top:412px;width:47px;text-align:right;font-size:11px;color:#1f4677">10</div>
<div class="abs" style="left:257px;top:412px;width:128px;text-align:right;font-size:11px;color:#1f4677">17/05/2025</div>
<div class="abs" style="left:392px;top:412px;width:47px;text-align:right;font-size:11px;color:#1f4677">0</div>
<div class="abs" style="left:446px;top:412px;width:47px;text-align:right;font-size:11px;color:#1f4677">0</div>
<div class="abs" style="left:500px;top:412px;width:47px;text-align:right;font-size:11px;color:#1f4677">0</div>
<div class="abs" style="left:554px;top:412px;width:47px;text-align:right;font-size:11px;color:#1f4677">0</div>
<div class="abs" style="left:29px;top:433px;font-size:11px;font-weight:bold;color:#1f4677">2.</div>
<div class="abs" style="left:91px;top:433px;width:105px;text-align:right;font-size:11px;color:#1f4677">$15,000</div>
<div class="abs" style="left:203px;top:433px;width:47px;text-align:right;font-size:11px;color:#1f4677">1</div>
<div class="abs" style="left:257px;top:433px;width:128px;text-align:right;font-size:11px;color:#1f4677">22/06/2025</div>
<div class="abs" style="left:392px;top:433px;width:47px;text-align:right;font-size:11px;color:#1f4677">2</div>
<div class="abs" style="left:446px;top:433px;width:47px;text-align:right;font-size:11px;color:#1f4677">0</div>
<div class="abs" style="left:500px;top:433px;width:47px;text-align:right;font-size:11px;color:#1f4677">0</div>
<div class="abs" style="left:554px;top:433px;width:47px;text-align:right;font-size:11px;color:#1f4677">0</div>
<div class="abs" style="left:29px;top:454px;font-size:11px;font-weight:bold;color:#1f4677">3.</div>
<div class="abs" style="left:91px;top:454px;width:105px;text-align:right;font-size:11px;color:#1f4677">$9,000</div>
<div class="abs" style="left:203px;top:454px;width:47px;text-align:right;font-size:11px;color:#1f4677">1</div>
<div class="abs" style="left:257px;top:454px;width:128px;text-align:right;font-size:11px;color:#1f4677">27/05/2025</div>
<div class="abs" style="left:392px;top:454px;width:47px;text-align:right;font-size:11px;color:#1f4677">0</div>
<div class="abs" style="left:446px;top:454px;width:47px;text-align:right;font-size:11px;color:#1f4677">0</div>
<div class="abs" style="left:500px;top:454px;width:47px;text-align:right;font-size:11px;color:#1f4677">0</div>
<div class="abs" style="left:554px;top:454px;width:47px;text-align:right;font-size:11px;color:#1f4677">0</div>
<div class="abs" style="left:4px;top:481px;width:595px;height:7px;background:#93a9c3;border-radius:4px"></div>
<div class="abs" style="left:613px;top:4px;width:6px;height:140px;background:#93a9c3;border-radius:3px"></div></div>
<div id="ai" class="abs"><div class="abs" style="left:0;top:0;width:375px;height:1px;background:#cfdae6"></div>
<div class="abs" style="left:0;top:1px;width:375px;height:45px;background:#2d5086;border-bottom:1px solid #1f4478"></div>
<div class="abs" style="left:160px;top:14px;font-size:14px;color:#fff;white-space:nowrap">AI Agent</div>
<div class="abs" style="left:341px;top:11px;width:23px;height:23px;background:#2a4a7c;border:1px solid #3d5f92;border-radius:2px"></div>
<svg class="abs" style="left:347px;top:17px" width="12" height="12" viewBox="0 0 12 12"><path d="M1 1l10 10M11 1L1 11" stroke="#fff" stroke-width="1.6"/></svg>
<div class="abs" style="left:11px;top:56px;width:353px;height:351px;background:#fff;border-radius:6px 0 0 6px"></div>
<div class="abs" style="left:355px;top:59px;width:6px;height:128px;background:#93a9c3;border-radius:3px"></div>
<div class="abs" style="left:32px;top:67px;width:299px;height:79px;background:#4a7bb0;border-radius:11px"></div>
<div class="abs" style="left:32px;top:77px;width:288px;font-size:12.5px;line-height:19px;color:#fff;text-align:right">Generate a report of opportunities grouped by<br>stage with total value, product count, and related<br>activities in the current quarter</div>
<div class="abs" style="left:32px;top:178px;width:299px;height:228px;background:#f5f7fb;border-radius:11px"></div>
<div class="abs" style="left:43px;top:188px;width:290px;font-size:12.5px;line-height:19px;color:#222;white-space:nowrap"><style>#ai b{letter-spacing:-0.27px}</style>New report is created<br>- <b>Opportunities by Stage Q2 2025</b><br>- <b>Analysis of opportunities grouped by sales</b><br><b>stage with value and activity metrics for current</b><br><b>quarter</b><br>- <b>Main Entity</b>: Opportunity<br>- <b>Related Entities</b>: Activity<br>- <b>Grouping</b>: By Sales stage<br>- <b>Filter Conditions</b>: Closing date is in this quarter<br>- <b>Chart type</b>: Stacked Column chart showing total<br>opportunity value by sales stage</div>
<svg class="abs" style="left:15px;top:425px" width="20" height="19" viewBox="0 0 20 19"><path d="M3.2 6.5A8 8 0 1 1 3 12" fill="none" stroke="#1e5a92" stroke-width="2"/><path d="M0.5 3.5l2.8 4 4-2.3" fill="none" stroke="#1e5a92" stroke-width="2"/><path d="M11 5.5v4.5h3.5" fill="none" stroke="#1e5a92" stroke-width="1.9"/></svg>
<svg class="abs" style="left:49px;top:424px" width="19" height="22" viewBox="0 0 19 22"><path d="M9.5 5.5a5 5 0 0 0-3 9c.8.7 1 1.5 1 2.5h4c0-1 .2-1.8 1-2.5a5 5 0 0 0-3-9z" fill="none" stroke="#8fb3d9" stroke-width="1.4"/><path d="M7.5 17h4v2.5a2 2 0 0 1-4 0z" fill="#8fb3d9"/><path d="M9.5 0v2.5M2 3l1.5 2M17 3l-1.5 2M0 8.5h2M17 8.5h2" stroke="#8fb3d9" stroke-width="1.3"/></svg>
<div class="abs" style="left:11px;top:462px;width:317px;height:94px;background:#f5f7fb;border:1px solid #f3a867;border-radius:4px;overflow:hidden"><div style="height:56px;background:#fff"></div></div>
<div class="abs" style="left:17px;top:470px;width:1.3px;height:13px;background:#1d3b66"></div>
<svg class="abs" style="left:23px;top:528px" width="18" height="17" viewBox="0 0 18 17"><circle cx="1.2" cy="2" r="0.8" fill="#7a7a7a"/><circle cx="5.5" cy="2" r="1.2" fill="#7a7a7a"/><circle cx="14" cy="2" r="2" fill="#7a7a7a"/><path d="M0.5 16.5L4.3 6.5h2.6l3.8 10H8.5l-.8-2.3H3.5l-.8 2.3zM4.1 12.4h3L5.6 8.2z" fill="#7a7a7a"/><rect x="12.8" y="6.5" width="2.4" height="10" fill="#7a7a7a"/></svg>
<svg class="abs" style="left:52px;top:528px" width="13" height="17" viewBox="0 0 13 17"><rect x="3.5" y="0" width="6" height="11" rx="3" fill="#1d3050"/><path d="M1 7.5a5.5 5.5 0 0 0 11 0" fill="none" stroke="#1d3050" stroke-width="1.5"/><path d="M6.5 13v4" stroke="#1d3050" stroke-width="1.6"/></svg>
<svg class="abs" style="left:344px;top:502px" width="16" height="14" viewBox="0 0 16 14"><path d="M0 0l16 7L0 14l2.5-7z" fill="#94acc6"/><path d="M2.5 7h7" stroke="#e6f4fc" stroke-width="1"/></svg>
<div class="abs" style="left:11px;top:559px;font-size:10.6px;font-style:italic;color:#9fb3c8;white-space:nowrap">Maximum number of characters is 300</div>
<div class="abs" style="left:292px;top:556px;width:33px;height:18px;background:#1b95e0;border-radius:0 0 3px 3px;color:#fff;font-size:9.5px;font-weight:bold;text-align:center;line-height:18px">BETA</div></div>
<div id="nav" class="abs"><div class="abs" style="left:0;top:0;width:1260px;height:1px;background:#1c3d6b"></div>
<div class="abs" style="left:908px;top:1px;width:87px;height:69px;background:#11284a"></div>
<svg class="abs" style="left:22px;top:21px" width="28" height="28" viewBox="0 0 28 28"><circle cx="14" cy="14" r="12.5" fill="none" stroke="#c5d2e3" stroke-width="1.6"/><path d="M14 8v12M8 14h12" stroke="#e8eef6" stroke-width="1.8"/></svg>
<svg class="abs" style="left:103px;top:13px" width="25" height="25" viewBox="0 0 25 25"><rect x="1" y="1" width="23" height="19" rx="1.5" fill="none" stroke="#f4f7fb" stroke-width="2"/><path d="M4 16.5v-2M6.5 16.5v-4M9 16.5v-5M11.5 16.5v-3M14 16.5v-2M16.5 16.5v-4M19 16.5v-7M21 16.5v-8" stroke="#f4f7fb" stroke-width="1.4"/><path d="M4 10l5.5-4 5.5 4 6-5" fill="none" stroke="#a9c1dd" stroke-width="1.2"/><circle cx="4" cy="10" r="1.6" fill="#a9c1dd"/><circle cx="9.5" cy="6" r="1.6" fill="#a9c1dd"/><circle cx="15" cy="10" r="1.6" fill="#a9c1dd"/><circle cx="20.5" cy="5" r="1.6" fill="#a9c1dd"/><rect x="10" y="20" width="5" height="3" fill="#a9c1dd"/><rect x="7" y="23" width="11" height="2" fill="#a9c1dd"/></svg>
<svg class="abs" style="left:183px;top:13px" width="26" height="26" viewBox="0 0 26 26"><rect x="11.5" y="0" width="1.8" height="15" fill="#f4f7fb"/><path d="M13.3 0.5H23l-3 3 3 3h-9.7z" fill="#a9c1dd"/><path d="M0 21v-5c0-2.5 5.5-3.5 12.7-3.5S25.5 13.5 25.5 16v5c0 2.5-5.7 4-12.8 4S0 23.5 0 21z" fill="#f4f7fb"/><ellipse cx="12.7" cy="16" rx="12.7" ry="3.3" fill="#a9c1dd"/></svg>
<svg class="abs" style="left:274px;top:14px" width="25" height="24" viewBox="0 0 25 24"><rect x="0" y="0.5" width="25" height="5.7" rx="2.8" fill="#f4f7fb"/><rect x="0" y="8.5" width="25" height="5.7" rx="2.8" fill="#a9c1dd"/><rect x="0" y="16.5" width="25" height="5.7" rx="2.8" fill="#f4f7fb"/><circle cx="3" cy="3.3" r="1.1" fill="#2a5088"/><circle cx="3" cy="11.3" r="1.1" fill="#2a5088"/><circle cx="3" cy="19.3" r="1.1" fill="#2a5088"/></svg>
<svg class="abs" style="left:374px;top:12px" width="27" height="26" viewBox="0 0 27 26"><rect x="0" y="0.5" width="13" height="25" rx="1.5" fill="#f4f7fb"/><g fill="#2a5088"><circle cx="3.5" cy="4.5" r="1.3"/><circle cx="8.5" cy="4.5" r="1.3"/><circle cx="3.5" cy="9.5" r="1.3"/><circle cx="8.5" cy="9.5" r="1.3"/><circle cx="3.5" cy="14.5" r="1.3"/><circle cx="8.5" cy="14.5" r="1.3"/><rect x="4.5" y="19" width="3.5" height="7"/></g><path d="M14 12l6-2.5 6 2.5v13.5H14z" fill="#a9c1dd"/><g fill="#2a5088"><rect x="16" y="15" width="2.2" height="2.2"/><rect x="20.5" y="15" width="2.2" height="2.2"/><rect x="18" y="20" width="3" height="6"/></g></svg>
<svg class="abs" style="left:462px;top:17px" width="25" height="18" viewBox="0 0 25 18"><rect x="0" y="0" width="25" height="16" rx="2" fill="#a9c1dd"/><rect x="7" y="15" width="11" height="3" fill="#a9c1dd"/><circle cx="8" cy="5.5" r="3" fill="#2a5088"/><path d="M3 13c0-3 2.2-4 5-4s5 1 5 4z" fill="#2a5088"/><path d="M15 4h6M15 7.5h6M15 11h6" stroke="#2a5088" stroke-width="1.6"/></svg>
<svg class="abs" style="left:548px;top:12px" width="28" height="26" viewBox="0 0 28 26"><path d="M10 10h16a2 2 0 0 1 2 2v8a2 2 0 0 1-2 2h-3l-2 3-2-3h-9z" fill="#a9c1dd"/><rect x="0" y="0" width="20" height="15" rx="2" fill="#f4f7fb"/><path d="M5 7.5l3.5 3.5 6.5-7" fill="none" stroke="#2a5088" stroke-width="2.4"/></svg>
<svg class="abs" style="left:631px;top:13px" width="25" height="25" viewBox="0 0 25 25"><rect x="1.2" y="1.2" width="22.6" height="22.6" rx="3" fill="none" stroke="#f4f7fb" stroke-width="2.3"/><circle cx="7" cy="7.5" r="1.7" fill="#a9c1dd"/><path d="M10.5 7.5h8M5 12.5h14M5 17h14" stroke="#a9c1dd" stroke-width="2.2"/></svg>
<svg class="abs" style="left:710px;top:15px" width="27" height="22" viewBox="0 0 27 22"><path d="M0.5 4l3 3 5-5.5M0.5 15l3 3 5-5.5" fill="none" stroke="#f4f7fb" stroke-width="2.3"/><path d="M12 2h14M14 8h6M12 13.5h14M14 19.5h6" stroke="#a9c1dd" stroke-width="2.3"/></svg>
<svg class="abs" style="left:789px;top:13px" width="25" height="26" viewBox="0 0 25 26"><ellipse cx="12.5" cy="3.5" rx="12.5" ry="3.5" fill="#a9c1dd"/><path d="M0 5c0 2 5.5 3.5 12.5 3.5S25 7 25 5v4.5c0 2-5.5 3.5-12.5 3.5S0 11.5 0 9.5z" fill="#f4f7fb"/><path d="M0 11.5c0 2 5.5 3.5 12.5 3.5S25 13.5 25 11.5V16c0 2-5.5 3.5-12.5 3.5S0 18 0 16z" fill="#f4f7fb"/><path d="M0 18c0 2 5.5 3.5 12.5 3.5S25 20 25 18v4c0 2-5.5 3.5-12.5 3.5S0 24 0 22z" fill="#f4f7fb"/><rect x="11" y="9.5" width="3.5" height="1.3" fill="#2a5088"/><rect x="11" y="16" width="3.5" height="1.3" fill="#2a5088"/><rect x="11" y="22.5" width="3.5" height="1.3" fill="#2a5088"/></svg>
<svg class="abs" style="left:861px;top:17px" width="27" height="19" viewBox="0 0 27 19"><path d="M0 5a1.5 1.5 0 0 1 1.5-1.5h11A1.5 1.5 0 0 1 14 5v6a1.5 1.5 0 0 1-1.5 1.5H9l-2.5 3-2.5-3H1.5A1.5 1.5 0 0 1 0 11z" fill="#f4f7fb"/><path d="M17 1v16M17 1h4M17 9h4M17 17h4" stroke="#a9c1dd" stroke-width="1.2" fill="none"/><rect x="21.5" y="-0.5" width="4" height="3" fill="#f4f7fb"/><rect x="21.5" y="7.5" width="4" height="3" fill="#f4f7fb"/><rect x="21.5" y="15.5" width="4" height="3" fill="#f4f7fb"/></svg>
<svg class="abs" style="left:938px;top:12px" width="27" height="26" viewBox="0 0 27 26"><rect x="0.5" y="17" width="4.5" height="9" fill="#2bb5e8"/><rect x="7.5" y="12" width="4.5" height="14" fill="#2bb5e8"/><rect x="14.5" y="14" width="4.5" height="12" fill="#2bb5e8"/><rect x="21.5" y="9" width="4.5" height="17" fill="#2bb5e8"/><path d="M2.5 11.5l6-6 7 3 8.5-6.5" fill="none" stroke="#f26b1d" stroke-width="1.8"/><circle cx="2.5" cy="11.5" r="2.2" fill="#f26b1d"/><circle cx="8.5" cy="5.5" r="2.2" fill="#f26b1d"/><circle cx="15.5" cy="8.5" r="2.2" fill="#f26b1d"/><circle cx="24" cy="2.3" r="2.2" fill="#f26b1d"/></svg>
<svg class="abs" style="left:1043px;top:12px" width="26" height="26" viewBox="0 0 26 26"><path d="M8 6V3a2 2 0 0 1 2-2h6a2 2 0 0 1 2 2v3h-2V3.2h-6V6z" fill="#f4f7fb"/><rect x="0" y="6" width="26" height="19.5" rx="3" fill="#f4f7fb"/><path d="M0 12.5h26" stroke="#2a5088" stroke-width="1.2"/><rect x="11" y="9.5" width="4" height="8" rx="2" fill="#f4f7fb" stroke="#2a5088" stroke-width="1.3"/></svg>
<div class="abs" style="left:1073px;top:47px;width:27px;height:12px;background:#5aab8a;border-radius:3px;color:#fff;font-size:9px;font-weight:bold;text-align:center;line-height:12px">NEW</div>
<svg class="abs" style="left:1130px;top:32px" width="19" height="6" viewBox="0 0 19 6" fill="#fff"><circle cx="3" cy="3" r="2.6"/><circle cx="9.5" cy="3" r="2.6"/><circle cx="16" cy="3" r="2.6"/></svg>
<svg class="abs" style="left:1199px;top:22px" width="27" height="28" viewBox="0 0 27 28"><path d="M3 14a10.5 10.5 0 0 1 21 0" fill="none" stroke="#a9c1dd" stroke-width="2.2"/><rect x="0" y="12" width="5" height="9" rx="2.5" fill="#a9c1dd"/><rect x="22" y="12" width="5" height="9" rx="2.5" fill="#a9c1dd"/><path d="M7 14c0-5 3-8 6.5-8S20 9 20 14v5c0 3-3 5.5-6.5 5.5S7 22 7 19z" fill="#f4f7fb"/><path d="M24 20c0 3-4 5.5-9 6" fill="none" stroke="#a9c1dd" stroke-width="1.6"/><rect x="11" y="24.5" width="5" height="3" rx="1.5" fill="#a9c1dd"/></svg>
<svg class="abs" style="left:1237px;top:5px" width="20" height="19" viewBox="0 0 20 19"><circle cx="10" cy="9.5" r="8.7" fill="none" stroke="#6d8db8" stroke-width="1.3"/><path d="M6.2 8l3.8 3.8L13.8 8" fill="none" stroke="#cfdbea" stroke-width="1.5"/></svg>
<div class="abs" style="left:65px;top:44px;width:100px;text-align:center;font-size:13.5px;letter-spacing:-0.35px;color:#fff">Navigator</div>
<div class="abs" style="left:145px;top:44px;width:100px;text-align:center;font-size:13.5px;letter-spacing:-0.35px;color:#fff">Leads</div>
<div class="abs" style="left:236.5px;top:44px;width:100px;text-align:center;font-size:13.5px;letter-spacing:-0.35px;color:#fff">Opportunities</div>
<div class="abs" style="left:337px;top:44px;width:100px;text-align:center;font-size:13.5px;letter-spacing:-0.35px;color:#fff">Accounts</div>
<div class="abs" style="left:424.5px;top:44px;width:100px;text-align:center;font-size:13.5px;letter-spacing:-0.35px;color:#fff">Contacts</div>
<div class="abs" style="left:512px;top:44px;width:100px;text-align:center;font-size:13.5px;letter-spacing:-0.35px;color:#fff">Activities</div>
<div class="abs" style="left:593.5px;top:44px;width:100px;text-align:center;font-size:13.5px;letter-spacing:-0.35px;color:#fff">Quotes</div>
<div class="abs" style="left:673px;top:44px;width:100px;text-align:center;font-size:13.5px;letter-spacing:-0.35px;color:#fff">Projects</div>
<div class="abs" style="left:751px;top:44px;width:100px;text-align:center;font-size:13.5px;letter-spacing:-0.35px;color:#fff">Assets</div>
<div class="abs" style="left:823px;top:44px;width:100px;text-align:center;font-size:13.5px;letter-spacing:-0.35px;color:#fff">Feeds</div>
<div class="abs" style="left:901.3px;top:44px;width:100px;text-align:center;font-size:13.5px;letter-spacing:-0.35px;color:#fff">Analytics</div>
<div class="abs" style="left:1013px;top:44px;font-size:13.5px;letter-spacing:-0.35px;color:#fff">Approvals</div></div>
</body></html>
